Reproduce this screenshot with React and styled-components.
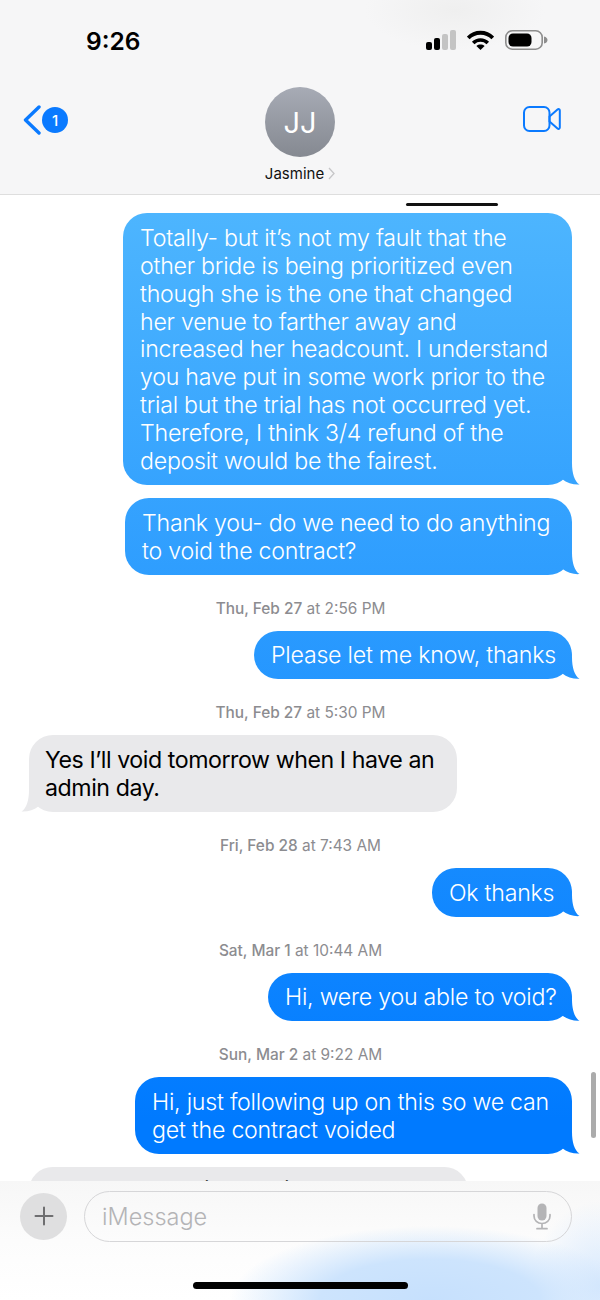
import React from "react";
import styled, { createGlobalStyle } from "styled-components";

const Global = createGlobalStyle`
  html, body { margin: 0; padding: 0; background: #fff; }
  * { box-sizing: border-box; }
`;

const Screen = styled.div`
  position: relative;
  width: 600px;
  height: 1300px;
  overflow: hidden;
  display: flex;
  flex-direction: column;
  background: #fff;
  font-family: Inter, "Liberation Sans", sans-serif;
`;

const Header = styled.header`
  flex: none;
  height: 195px;
  border-bottom: 1.5px solid #dedede;
  background:
    radial-gradient(ellipse 90px 40px at 455px 10px, #efefef 0%, rgba(239, 239, 239, 0) 100%),
    #f6f6f7;
`;

const StatusBar = styled.div`
  height: 82px;
  display: flex;
  align-items: center;
  justify-content: space-between;
  padding: 0 52px 0 86px;
`;

const Time = styled.div`
  font-size: 24.5px;
  font-weight: 600;
  color: #000;
`;

const StatusIcons = styled.div`
  display: flex;
  align-items: center;
  gap: 11px;
  margin-top: -2px;
`;

const Nav = styled.div`
  display: grid;
  grid-template-columns: 1fr auto 1fr;
  padding-top: 5px;
`;

const BackGroup = styled.div`
  display: flex;
  align-items: center;
  height: 26px;
  margin: 20px 0 0 23px;
`;

const Badge = styled.span`
  width: 26px;
  height: 26px;
  margin-left: 1px;
  border-radius: 50%;
  background: #0a7aff;
  color: #fff;
  font-size: 15px;
  font-weight: 500;
  display: flex;
  align-items: center;
  justify-content: center;
`;

const Contact = styled.div`
  display: flex;
  flex-direction: column;
  align-items: center;
`;

const Avatar = styled.div`
  width: 70px;
  height: 70px;
  border-radius: 50%;
  background: linear-gradient(#a7abb5, #858991);
  color: #fff;
  font-size: 29px;
  font-weight: 400;
  display: flex;
  align-items: center;
  justify-content: center;
`;

const NameRow = styled.div`
  display: flex;
  align-items: center;
  gap: 4px;
  height: 20px;
  margin-top: 6px;
  font-size: 15px;
  color: #111;
`;

const VideoSlot = styled.div`
  display: flex;
  justify-content: flex-end;
  align-items: flex-start;
  padding: 19px 39px 0 0;
`;

const Thread = styled.main`
  flex: 1;
  min-height: 0;
  overflow: hidden;
  display: flex;
  flex-direction: column;
  padding: 18px 28px 0 29px;
`;

const Stamp = styled.div`
  height: 20px;
  line-height: 20px;
  margin: 24px 0 12px;
  text-align: center;
  font-size: 15.4px;
  color: #8c8c90;
  b { font-weight: 500; }
`;

const Bubble = styled.div`
  position: relative;
  flex: none;
  width: ${(p) => p.$width}px;
  align-self: ${(p) => (p.$in ? "flex-start" : "flex-end")};
  margin-top: ${(p) => p.$gap || 0}px;
  padding: 11.8px 0 9px ${(p) => (p.$in ? 16 : 17)}px;
  border-radius: 24px;
  font-size: 23.2px;
  line-height: 27.9px;
  letter-spacing: ${(p) => (p.$in ? "-0.45px" : "-0.25px")};
  font-weight: ${(p) => (p.$in ? 400 : 300)};
  white-space: nowrap;
  color: ${(p) => (p.$in ? "#000" : "#fff")};
  background: ${(p) =>
    p.$in
      ? "#e9e9eb"
      : "linear-gradient(to bottom, #4db5fe 213px, #007aff 1120px) fixed"};

  &::after {
    content: "";
    position: absolute;
    bottom: 0;
    width: 24px;
    height: 28px;
    background: inherit;
    ${(p) => (p.$in ? "left: -8px; transform: scaleX(-1);" : "right: -8px;")}
    clip-path: path("M15 0 L16 6 C16 16 18.5 24.5 23.5 27.5 C18 28 11 26 6 22 Z");
  }
`;

const PeekBubble = styled(Bubble)`
  padding-top: 10px;
`;

const Overlay = styled.div`
  position: absolute;
  left: 0;
  right: 0;
  bottom: 0;
  height: 119px;
  padding: 9px 28px 0 20px;
  display: flex;
  flex-direction: column;
  background:
    radial-gradient(ellipse 200px 74px at 430px 119px, #c6e0fd 0%, #cde4fd 55%, rgba(225, 239, 254, 0) 100%),
    radial-gradient(ellipse 70px 85px at 600px 105px, #d6e8fd 0%, rgba(220, 236, 253, 0) 100%),
    linear-gradient(to bottom, #f7f7f7 0%, #fcfcfc 50%, #ffffff 100%);
`;

const ComposerRow = styled.div`
  display: flex;
  align-items: center;
  gap: 17px;
  height: 52px;
`;

const PlusButton = styled.div`
  flex: none;
  width: 47px;
  height: 47px;
  border-radius: 50%;
  background: #dfdfe0;
  display: flex;
  align-items: center;
  justify-content: center;
`;

const Field = styled.div`
  flex: 1;
  height: 51px;
  border: 1.5px solid #d6d6d8;
  border-radius: 26px;
  display: flex;
  align-items: center;
  justify-content: space-between;
  padding: 0 20px 0 17px;
`;

const Placeholder = styled.span`
  font-size: 23.5px;
  font-weight: 300;
  color: #b4b4b6;
`;

const HomeBar = styled.div`
  width: 215px;
  height: 7px;
  margin: 40px auto 0 173px;
  border-radius: 4px;
  background: #000;
`;

const TopIndicator = styled.div`
  position: absolute;
  top: 203px;
  left: 406px;
  width: 92px;
  height: 3px;
  border-radius: 2px;
  background: #111;
`;

const ScrollThumb = styled.div`
  position: absolute;
  top: 1072px;
  left: 591px;
  width: 5px;
  height: 66px;
  border-radius: 3px;
  background: #ababab;
`;

const Signal = () => (
  <svg width="30" height="20" viewBox="0 0 30 20">
    <rect x="0" y="12" width="6" height="8" rx="2" fill="#000" />
    <rect x="8" y="8" width="6" height="12" rx="2" fill="#000" />
    <rect x="16" y="4" width="6" height="16" rx="2" fill="#c4c4c4" />
    <rect x="24" y="0" width="6" height="20" rx="2" fill="#c4c4c4" />
  </svg>
);

const Wifi = () => (
  <svg width="27" height="20" viewBox="0 0 27 20" fill="none">
    <path d="M1.2 8C7.8 1 19.2 1 25.8 8" stroke="#000" strokeWidth="3.8" />
    <path d="M6.2 13C10.3 9 16.7 9 20.8 13" stroke="#000" strokeWidth="3.6" />
    <path d="M13.5 20L9.4 15.9C11.8 14 15.2 14 17.6 15.9Z" fill="#000" />
  </svg>
);

const Battery = () => (
  <svg width="43" height="20" viewBox="0 0 43 20">
    <rect x="0.8" y="0.8" width="36.4" height="18.4" rx="6.5" fill="none" stroke="#8d8d8d" strokeWidth="1.6" />
    <rect x="3.5" y="3.5" width="23" height="13" rx="4.5" fill="#000" />
    <path d="M39 6.5C41.5 7 42.5 8.5 42.5 10S41.5 13 39 13.5Z" fill="#8d8d8d" />
  </svg>
);

const BackChevron = () => (
  <svg width="18" height="30" viewBox="0 0 18 30" fill="none">
    <path d="M16 2L2.5 15L16 28" stroke="#0a7aff" strokeWidth="3.4" strokeLinecap="round" strokeLinejoin="round" />
  </svg>
);

const NameChevron = () => (
  <svg width="7" height="13" viewBox="0 0 7 13" fill="none">
    <path d="M1 1L6 6.5L1 12" stroke="#c6c6c8" strokeWidth="1.3" />
  </svg>
);

const VideoIcon = () => (
  <svg width="38" height="26" viewBox="0 0 38 26" fill="none" stroke="#0a7aff" strokeWidth="2" strokeLinejoin="round">
    <rect x="1" y="1" width="25.5" height="24" rx="5.5" />
    <path d="M26.5 10.5L34.5 3.5C35.5 2.7 36.8 3.2 36.8 4.5V21.5C36.8 22.8 35.5 23.3 34.5 22.5L26.5 15.5Z" />
  </svg>
);

const PlusIcon = () => (
  <svg width="20" height="20" viewBox="0 0 20 20" fill="none">
    <path d="M10 1.5V18.5M1.5 10H18.5" stroke="#6e6e70" strokeWidth="2" strokeLinecap="round" />
  </svg>
);

const MicIcon = () => (
  <svg width="18" height="27" viewBox="0 0 18 27" fill="none">
    <rect x="4.5" y="0.5" width="9" height="17" rx="4.5" fill="#b4b4b6" />
    <path d="M1 11.5V13C1 17.5 4.5 20.5 9 20.5S17 17.5 17 13V11.5M9 20.5V25M4 25.7H14" stroke="#b4b4b6" strokeWidth="1.7" strokeLinecap="round" />
  </svg>
);

const lines1 = [
  "Totally- but it’s not my fault that the",
  "other bride is being prioritized even",
  "though she is the one that changed",
  "her venue to farther away and",
  "increased her headcount. I understand",
  "you have put in some work prior to the",
  "trial but the trial has not occurred yet.",
  "Therefore, I think 3/4 refund of the",
  "deposit would be the fairest.",
];

const Lines = ({ items }) =>
  items.map((line, i) => (
    <React.Fragment key={i}>
      {i > 0 && <br />}
      {line}
    </React.Fragment>
  ));

const TimeStamp = ({ day, time }) => (
  <Stamp>
    <b>{day}</b> at {time}
  </Stamp>
);

export default function App() {
  return (
    <Screen>
      <Global />
      <Header>
        <StatusBar>
          <Time>9:26</Time>
          <StatusIcons>
            <Signal />
            <Wifi />
            <Battery />
          </StatusIcons>
        </StatusBar>
        <Nav>
          <BackGroup>
            <BackChevron />
            <Badge>1</Badge>
          </BackGroup>
          <Contact>
            <Avatar>JJ</Avatar>
            <NameRow>
              Jasmine
              <NameChevron />
            </NameRow>
          </Contact>
          <VideoSlot>
            <VideoIcon />
          </VideoSlot>
        </Nav>
      </Header>

      <Thread>
        <Bubble $width={449}>
          <Lines items={lines1} />
        </Bubble>
        <Bubble $width={447} $gap={13}>
          <Lines items={["Thank you- do we need to do anything", "to void the contract?"]} />
        </Bubble>
        <TimeStamp day="Thu, Feb 27" time="2:56 PM" />
        <Bubble $width={318}>Please let me know, thanks</Bubble>
        <TimeStamp day="Thu, Feb 27" time="5:30 PM" />
        <Bubble $in $width={428}>
          <Lines items={["Yes I’ll void tomorrow when I have an", "admin day."]} />
        </Bubble>
        <TimeStamp day="Fri, Feb 28" time="7:43 AM" />
        <Bubble $width={140}>Ok thanks</Bubble>
        <TimeStamp day="Sat, Mar 1" time="10:44 AM" />
        <Bubble $width={304}>Hi, were you able to void?</Bubble>
        <TimeStamp day="Sun, Mar 2" time="9:22 AM" />
        <Bubble $width={437}>
          <Lines items={["Hi, just following up on this so we can", "get the contract voided"]} />
        </Bubble>
        <PeekBubble $in $width={439} $gap={13}>
          The contract will be voided today, thank
        </PeekBubble>
      </Thread>

      <TopIndicator />
      <ScrollThumb />

      <Overlay>
        <ComposerRow>
          <PlusButton>
            <PlusIcon />
          </PlusButton>
          <Field>
            <Placeholder>iMessage</Placeholder>
            <MicIcon />
          </Field>
        </ComposerRow>
        <HomeBar />
      </Overlay>
    </Screen>
  );
}
